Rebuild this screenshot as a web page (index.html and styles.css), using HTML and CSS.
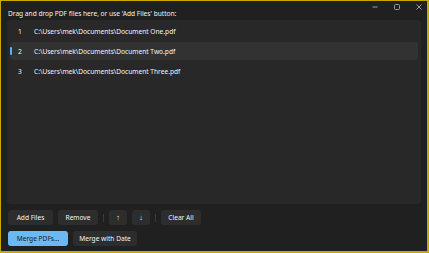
FILE: index.html
```html
<!DOCTYPE html>
<html lang="en">
<head>
    <meta charset="UTF-8">
    <meta name="viewport" content="width=device-width, initial-scale=1.0">
    <title>PDF Merger</title>
    <link rel="stylesheet" href="styles.css">
</head>
<body>
    <div class="window">
        <div class="titlebar">
            <span class="hint">Drag and drop PDF files here, or use 'Add Files' button:</span>
            <div class="controls">
                <span class="ctl">
                    <svg width="10" height="10" viewBox="0 0 10 10"><path d="M2.5 5h5" stroke="#9a9a9a" stroke-width="1"/></svg>
                </span>
                <span class="ctl">
                    <svg width="10" height="10" viewBox="0 0 10 10"><rect x="2.5" y="2.5" width="5" height="5" rx="1" fill="none" stroke="#9a9a9a" stroke-width="1"/></svg>
                </span>
                <span class="ctl">
                    <svg width="10" height="10" viewBox="0 0 10 10"><path d="M2.5 2.5l5 5M7.5 2.5l-5 5" stroke="#9a9a9a" stroke-width="1"/></svg>
                </span>
            </div>
        </div>
        <div class="list">
            <div class="row"><span class="num">1</span><span class="path">C:\Users\mek\Documents\Document One.pdf</span></div>
            <div class="row selected"><span class="num">2</span><span class="path">C:\Users\mek\Documents\Document Two.pdf</span></div>
            <div class="row"><span class="num">3</span><span class="path">C:\Users\mek\Documents\Document Three.pdf</span></div>
        </div>
        <div class="toolbar">
            <button class="btn w-add">Add Files</button>
            <button class="btn w-remove">Remove</button>
            <span class="sep"></span>
            <button class="btn w-arrow">&#8593;</button>
            <button class="btn w-arrow">&#8595;</button>
            <span class="sep"></span>
            <button class="btn w-clear">Clear All</button>
        </div>
        <div class="toolbar">
            <button class="btn primary w-merge">Merge PDFs...</button>
            <button class="btn w-date">Merge with Date</button>
        </div>
    </div>
</body>
</html>
```
FILE: styles.css
```css
* {
    box-sizing: border-box;
}
html, body {
    margin: 0;
    padding: 0;
    background: #202020;
}
body {
    font-family: "Noto Sans", "Open Sans", sans-serif;
    font-size: 6.6px;
    color: #f4f4f4;
}
.window {
    width: 429px;
    height: 253px;
    border: 1px solid #c9a600;
    border-right-width: 2px;
    border-bottom-width: 2px;
    display: flex;
    flex-direction: column;
    padding: 0 6px 0 6px;
}
.titlebar {
    height: 19px;
    display: flex;
    align-items: center;
    justify-content: space-between;
    padding-left: 1px;
}
.hint {
    margin-top: 5px;
}
.controls {
    display: flex;
    align-self: flex-start;
    gap: 12px;
    margin-top: 1px;
    margin-right: -3px;
}
.ctl {
    width: 10px;
    height: 10px;
    display: flex;
}
.list {
    height: 184px;
    background: #282828;
    border-radius: 4px;
    padding: 2px 3px;
    display: flex;
    flex-direction: column;
    gap: 2px;
}
.row {
    height: 18px;
    display: flex;
    align-items: center;
    border-radius: 3px;
    position: relative;
}
.row.selected {
    background: #323232;
}
.row.selected::before {
    content: "";
    position: absolute;
    left: 0;
    top: 5px;
    width: 2px;
    height: 8px;
    border-radius: 1px;
    background: #5fb2f2;
}
.num {
    width: 24px;
    padding-left: 8px;
}
.toolbar {
    display: flex;
    align-items: center;
    gap: 5px;
    margin-top: 6px;
    padding-left: 1px;
}
.btn {
    height: 15px;
    padding: 0;
    border: none;
    border-radius: 3px;
    background: #2d2d2d;
    color: #f4f4f4;
    font-family: inherit;
    font-size: 6.6px;
    line-height: 15px;
    text-align: center;
    white-space: nowrap;
}
.btn.primary {
    background: #6cb8f2;
    color: #1a1a1a;
}
.w-arrow {
    font-size: 7.5px;
}
.sep {
    width: 1px;
    height: 8px;
    background: #3a3a3a;
}
.w-add { width: 45px; }
.w-remove { width: 40px; }
.w-arrow { width: 18px; }
.w-clear { width: 40px; }
.w-merge { width: 60px; }
.w-date { width: 64px; }
```
